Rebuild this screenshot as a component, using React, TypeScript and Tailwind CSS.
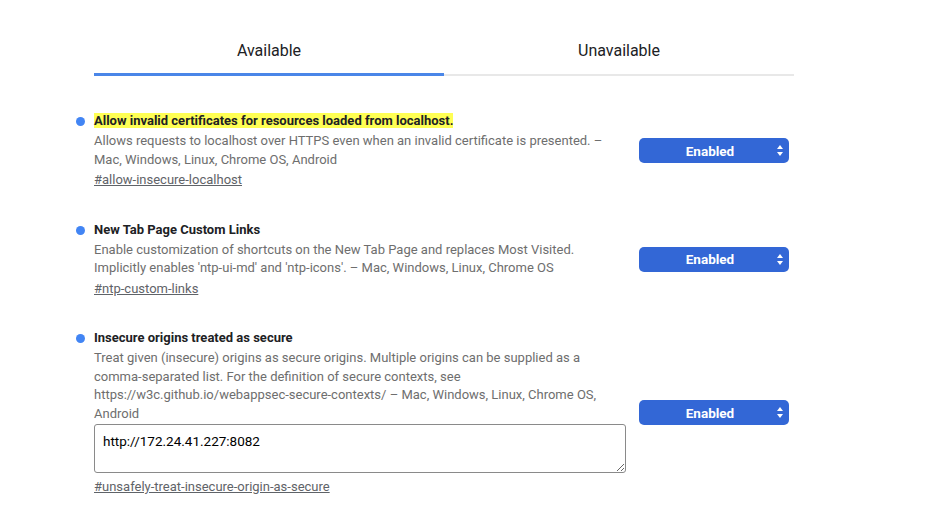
const font = { fontFamily: "Roboto, 'Liberation Sans', sans-serif" };

interface FlagProps {
  title: string;
  highlight?: boolean;
  lines: string[];
  link: string;
  value?: string;
}

const SelectBox = () => (
  <div className="relative flex h-[25px] w-[150px] shrink-0 items-center justify-center rounded-[5px] bg-[#3367d6] pr-[8px] text-[13.5px] font-bold text-white">
    <span>Enabled</span>
    <svg
      className="absolute right-[6px] top-[7px]"
      width="6"
      height="11"
      viewBox="0 0 6 11"
      fill="white"
    >
      <path d="M3 0 L6 4 L0 4 Z" />
      <path d="M0 7 L6 7 L3 11 Z" />
    </svg>
  </div>
);

const Flag = ({ title, highlight, lines, link, value }: FlagProps) => {
  return (
    <div className="flex items-center">
      <div className="flex w-[545px] shrink-0">
        <div className="mr-[9px] mt-[5px] h-[9px] w-[9px] shrink-0 rounded-full bg-[#4285f4]" />
        <div className="flex-1 text-[13px] leading-[18.5px]">
          <div className="mb-[3px] h-[17px] leading-[17px]">
            <span
              className={`font-bold text-[#202124] ${highlight ? "bg-[#ffff54]" : ""}`}
            >
              {title}
            </span>
          </div>
          <div className="text-[#6e6e6e]">
            {lines.map((l, i) => (
              <div key={i}>{l}</div>
            ))}
          </div>
          {value && (
            <textarea
              readOnly
              value={value}
              className="mb-[5px] mt-[1px] block h-[49px] w-[532px] resize-y rounded-[3px] border border-[#8a8a8a] px-[8px] pt-[7px] text-[13.5px] leading-[18px] text-black"
            />
          )}
          <div className="mt-[2px] text-[#5f6368] underline">{link}</div>
        </div>
      </div>
      <div className="ml-[18px]">
        <SelectBox />
      </div>
    </div>
  );
};

const App = () => {
  return (
    <div className="h-[515px] w-[936px] bg-white" style={font}>
      <div className="ml-[94px] w-[700px] pt-[39px]">
        <div className="flex border-b-2 border-[#e8e8e8]">
          <div className="-mb-[2px] flex h-[37px] w-[350px] items-start justify-center border-b-[3px] border-[#4a86e8] text-[16px] text-[#202124]">
            Available
          </div>
          <div className="flex h-[35px] w-[350px] items-start justify-center text-[16px] text-[#202124]">
            Unavailable
          </div>
        </div>
      </div>
      <div className="ml-[76px] mt-[36px] flex flex-col gap-[31px]">
        <Flag
          highlight
          title="Allow invalid certificates for resources loaded from localhost."
          lines={[
            "Allows requests to localhost over HTTPS even when an invalid certificate is presented. –",
            "Mac, Windows, Linux, Chrome OS, Android",
          ]}
          link="#allow-insecure-localhost"
        />
        <Flag
          title="New Tab Page Custom Links"
          lines={[
            "Enable customization of shortcuts on the New Tab Page and replaces Most Visited.",
            "Implicitly enables 'ntp-ui-md' and 'ntp-icons'. – Mac, Windows, Linux, Chrome OS",
          ]}
          link="#ntp-custom-links"
        />
        <Flag
          title="Insecure origins treated as secure"
          lines={[
            "Treat given (insecure) origins as secure origins. Multiple origins can be supplied as a",
            "comma-separated list. For the definition of secure contexts, see",
            "https://w3c.github.io/webappsec-secure-contexts/ – Mac, Windows, Linux, Chrome OS,",
            "Android",
          ]}
          value="http://172.24.41.227:8082"
          link="#unsafely-treat-insecure-origin-as-secure"
        />
      </div>
    </div>
  );
};

export default App;
